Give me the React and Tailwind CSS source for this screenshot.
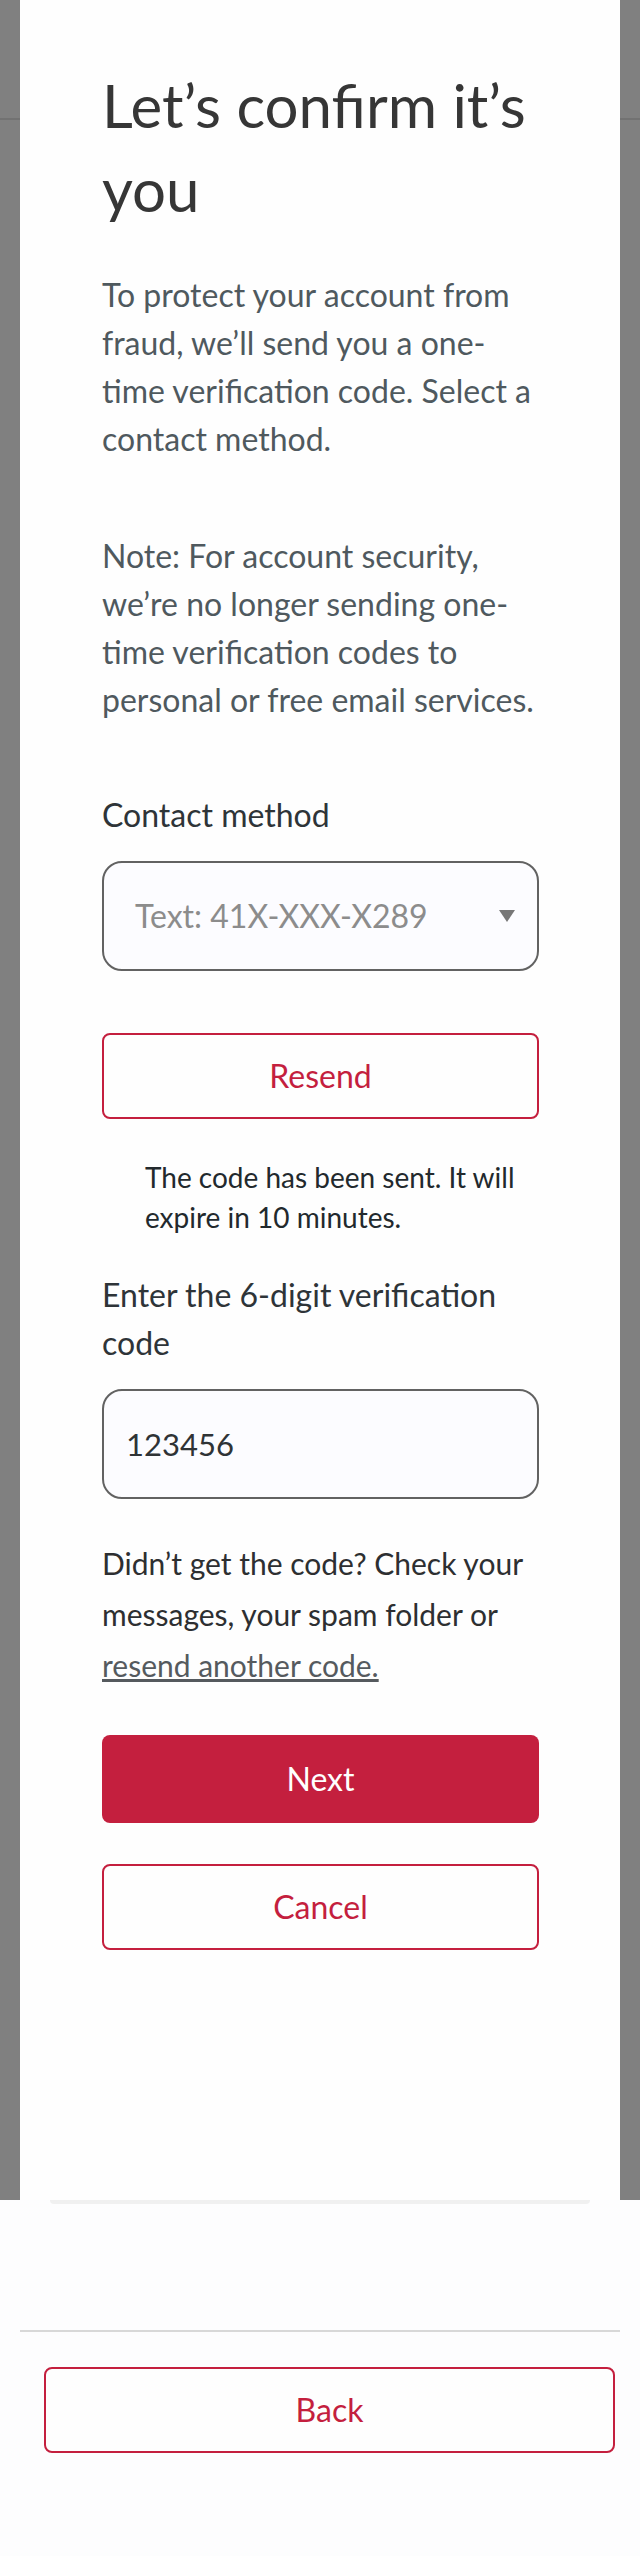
import React from 'react';

const SideStrip = () => (
    <div className="w-[20px] shrink-0 flex flex-col">
        <div className="h-[120px] border-b-2 border-[#727272]"></div>
    </div>
);

const OutlineButton = ({ children, className = '' }) => (
    <button
        type="button"
        className={`block h-[86px] rounded-[8px] border-2 border-[#c41f3e] bg-[#fefefe] text-[32px] text-[#c41f3e] ${className}`}
    >
        {children}
    </button>
);

const App = () => {
    return (
        <div className="min-h-[2556px] bg-[#fdfdfe] font-['Lato','Liberation_Sans',sans-serif]">
            <div className="flex bg-[#808080]">
                <SideStrip />
                <div className="w-[600px] h-[2200px] bg-[#fefefe] pl-[82px] pr-[81px] pt-[63px]">
                    <h1 className="text-[60px] leading-[84px] font-normal text-[#363636] whitespace-nowrap">
                        Let’s confirm it’s<br />you
                    </h1>

                    <p className="mt-[40px] text-[32px] leading-[48px] text-[#4f595e] whitespace-nowrap">
                        To protect your account from<br />
                        fraud, we’ll send you a one-<br />
                        time verification code. Select a<br />
                        contact method.
                    </p>

                    <p className="mt-[69px] text-[32px] leading-[48px] text-[#4f595e] whitespace-nowrap">
                        Note: For account security,<br />
                        we’re no longer sending one-<br />
                        time verification codes to<br />
                        personal or free email services.
                    </p>

                    <label className="block mt-[67px] text-[32px] leading-[48px] text-[#2e3438]">
                        Contact method
                    </label>
                    <div className="mt-[22px] h-[110px] rounded-[20px] border-2 border-[#626262] bg-[#fcfcff] flex items-center justify-between pl-[31px] pr-[22px]">
                        <span className="text-[32px] text-[#8c8c8c]">Text: 41X-XXX-X289</span>
                        <svg width="16" height="12" viewBox="0 0 16 12">
                            <path d="M0 0 H16 L8 12 Z" fill="#777777" />
                        </svg>
                    </div>

                    <OutlineButton className="mt-[62px] w-full">Resend</OutlineButton>

                    <p className="mt-[38px] pl-[43px] text-[28px] leading-[40px] text-[#22292d] whitespace-nowrap">
                        The code has been sent. It will<br />
                        expire in 10 minutes.
                    </p>

                    <label className="block mt-[34px] text-[32px] leading-[48px] text-[#2e3438] whitespace-nowrap">
                        Enter the 6-digit verification<br />code
                    </label>
                    <div className="mt-[22px] h-[110px] rounded-[20px] border-2 border-[#626262] bg-[#fcfcff] flex items-center pl-[22px]">
                        <span className="text-[31px] text-[#2f3336]">123456</span>
                    </div>

                    <p className="mt-[39px] text-[30px] leading-[51px] text-[#2d2f31] whitespace-nowrap">
                        Didn’t get the code? Check your<br />
                        messages, your spam folder or<br />
                        <a href="#" className="underline text-[#555a5e]">resend another code.</a>
                    </p>

                    <button
                        type="button"
                        className="block mt-[44px] w-full h-[88px] rounded-[8px] bg-[#c41f3e] text-[32px] text-white"
                    >
                        Next
                    </button>
                    <OutlineButton className="mt-[41px] w-full">Cancel</OutlineButton>
                </div>
                <SideStrip />
            </div>

            <div className="mx-[50px] h-[4px] rounded-b-[40px] bg-[#f0f0f0]"></div>
            <div className="mt-[126px] mx-[20px] h-[2px] bg-[#d8d8d8]"></div>
            <OutlineButton className="mt-[35px] ml-[44px] w-[571px]">Back</OutlineButton>
        </div>
    );
};

export default App;
